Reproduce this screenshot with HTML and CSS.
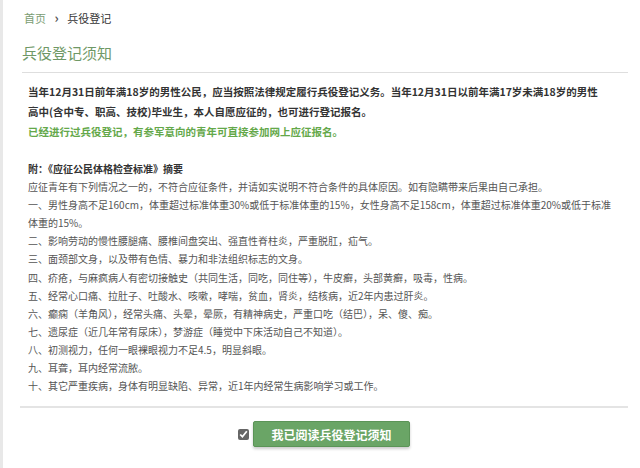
FILE: index.html
```html
<!DOCTYPE html>
<html lang="zh-CN">
<head>
    <meta charset="UTF-8">
    <meta name="viewport" content="width=device-width, initial-scale=1.0">
    <title>兵役登记须知</title>
    <link rel="stylesheet" href="styles.css">
</head>
<body>
    <div class="page">
        <!-- breadcrumb -->
        <div class="crumb">
            <a href="#" class="crumb-home">首页</a>
            <span class="crumb-sep">&rsaquo;</span>
            <span class="crumb-current">兵役登记</span>
        </div>

        <h1 class="title">兵役登记须知</h1>

        <div class="notice">
            <p class="intro">当年12月31日前年满18岁的男性公民，应当按照法律规定履行兵役登记义务。当年12月31日以前年满17岁未满18岁的男性高中(含中专、职高、技校)毕业生，本人自愿应征的，也可进行登记报名。</p>
            <p class="intro green">已经进行过兵役登记，有参军意向的青年可直接参加网上应征报名。</p>

            <div class="appendix">
                <p class="appendix-title">附：《应征公民体格检查标准》摘要</p>
                <p>应征青年有下列情况之一的，不符合应征条件，并请如实说明不符合条件的具体原因。如有隐瞒带来后果由自己承担。</p>
                <p>一、男性身高不足160cm，体重超过标准体重30%或低于标准体重的15%，女性身高不足158cm，体重超过标准体重20%或低于标准体重的15%。</p>
                <p>二、影响劳动的慢性腰腿痛、腰椎间盘突出、强直性脊柱炎，严重脱肛，疝气。</p>
                <p>三、面颈部文身，以及带有色情、暴力和非法组织标志的文身。</p>
                <p>四、疥疮，与麻疯病人有密切接触史（共同生活，同吃，同住等），牛皮癣，头部黄癣，吸毒，性病。</p>
                <p>五、经常心口痛、拉肚子、吐酸水、咳嗽，哮喘，贫血，肾炎，结核病，近2年内患过肝炎。</p>
                <p>六、癫痫（羊角风），经常头痛、头晕，晕厥，有精神病史，严重口吃（结巴），呆、傻、痴。</p>
                <p>七、遗尿症（近几年常有尿床），梦游症（睡觉中下床活动自己不知道）。</p>
                <p>八、初测视力，任何一眼裸眼视力不足4.5，明显斜眼。</p>
                <p>九、耳聋，耳内经常流脓。</p>
                <p>十、其它严重疾病，身体有明显缺陷、异常，近1年内经常生病影响学习或工作。</p>
            </div>
        </div>

        <div class="actions">
            <input type="checkbox" class="agree" checked>
            <button class="btn-read">我已阅读兵役登记须知</button>
        </div>
    </div>
</body>
</html>
```

FILE: styles.css
```css
body {
    margin: 0;
    background-color: #fff;
    font-family: "Noto Sans CJK SC", "Liberation Sans", sans-serif;
    color: #444;
}
.page {
    border-left: 3px solid #e8e8e8;
    padding: 0 12px 0 17px;
    height: 468px;
    box-sizing: border-box;
}
.crumb {
    padding: 10px 0 0 4px;
    font-size: 11px;
    line-height: 16px;
    height: 16px;
}
.crumb-home {
    color: #7a9c72;
    text-decoration: none;
}
.crumb-sep {
    margin: 0 6px;
    color: #555;
    font-weight: bold;
    font-size: 13px;
}
.crumb-current {
    color: #333;
}
.title {
    margin: 17px 0 0 2px;
    font-size: 15px;
    line-height: 20px;
    font-weight: normal;
    color: #6f9866;
    padding-bottom: 9px;
    border-bottom: 1px solid #dedede;
}
.notice {
    padding: 9px 8px 0 8px;
}
.notice p {
    margin: 0;
}
.intro {
    margin-right: 16px;
    font-size: 10.5px;
    line-height: 20px;
    font-weight: bold;
    color: #333;
}
.notice .intro {
    margin-right: 16px;
}
.green {
    color: #64a84a;
}
.appendix {
    margin-top: 18px;
    font-size: 10px;
    line-height: 18.1px;
    color: #555;
}
.appendix-title {
    font-weight: bold;
    color: #333;
}
.actions {
    margin-top: 11px;
    padding-top: 13px;
    border-top: 2px solid #e4e4e4;
    display: flex;
    justify-content: center;
    align-items: center;
    gap: 4px;
}
.agree {
    margin: 0;
    width: 11px;
    height: 11px;
    accent-color: #666;
}
.btn-read {
    width: 157px;
    height: 26px;
    background-color: #6aa566;
    border: 1px solid #5b9457;
    border-radius: 2px;
    box-shadow: 0 2px 3px rgba(0, 0, 0, 0.2);
    color: #fff;
    font-family: "Noto Sans CJK SC", sans-serif;
    font-size: 12px;
    font-weight: bold;
}
```
